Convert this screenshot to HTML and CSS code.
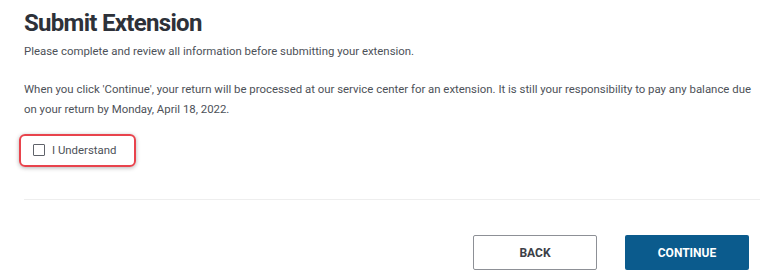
FILE: index.html
```html
<!DOCTYPE html>
<html lang="en">
<head>
    <meta charset="UTF-8">
    <meta name="viewport" content="width=device-width, initial-scale=1.0">
    <title>Submit Extension</title>
    <link rel="stylesheet" href="styles.css">
</head>
<body>

    <div class="page">
        <h1>Submit Extension</h1>
        <p class="intro">Please complete and review all information before submitting your extension.</p>

        <p class="notice">When you click 'Continue', your return will be processed at our service center for an extension. It is still your responsibility to pay any balance due on your return by Monday, April 18, 2022.</p>

        <div class="agree">
            <label class="check">
                <input type="checkbox" id="understand">
                <span class="box"></span>
                I Understand
            </label>
        </div>

        <hr class="divider">

        <div class="actions">
            <button class="btn btn-back">BACK</button>
            <button class="btn btn-continue">CONTINUE</button>
        </div>
    </div>

</body>
</html>
```

FILE: styles.css
```css
body {
    font-family: Roboto, 'Liberation Sans', Arial, sans-serif;
    background-color: #ffffff;
    color: #4a4e55;
    margin: 0;
}
.page {
    padding: 7px 8px 0 24px;
}
h1 {
    color: #2d3139;
    font-size: 24px;
    font-weight: 700;
    letter-spacing: -0.7px;
    margin: 0;
    line-height: 32px;
}
p {
    font-size: 11.4px;
    line-height: 20px;
    margin: 0;
    color: #4d5158;
}
.intro {
    margin-top: 2px;
}
.notice {
    margin-top: 18px;
}
.agree {
    display: inline-block;
    margin: 15px 0 0 -5px;
    padding: 6px 18px 7px 12px;
    border: 2px solid #e8434c;
    border-radius: 6px;
    box-shadow: 0 1px 4px rgba(0, 0, 0, 0.3);
}
.check {
    display: flex;
    align-items: center;
    gap: 7px;
    font-size: 11.4px;
    color: #4d5158;
    line-height: 16px;
}
.check input {
    display: none;
}
.box {
    width: 10px;
    height: 10px;
    border: 1px solid #5f636a;
    border-radius: 1px;
}
.divider {
    border: none;
    border-top: 1px solid #eeeeee;
    margin: 32px 0 0 0;
}
.actions {
    display: flex;
    justify-content: flex-end;
    gap: 28px;
    margin-top: 35px;
    padding-right: 11px;
}
.btn {
    width: 124px;
    height: 35px;
    font-family: Roboto, 'Liberation Sans', Arial, sans-serif;
    font-size: 12px;
    font-weight: 700;
    border-radius: 2px;
    cursor: pointer;
}
.btn-back {
    background-color: #ffffff;
    color: #3c4047;
    border: 1px solid #8d9096;
}
.btn-continue {
    background-color: #0b5b8d;
    color: #ffffff;
    border: none;
}
```
